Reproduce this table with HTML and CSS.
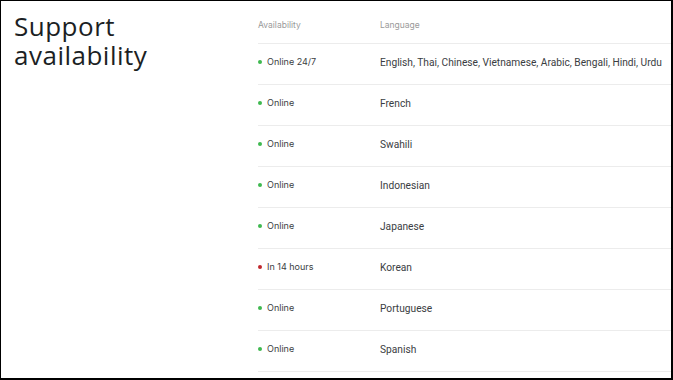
FILE: index.html
```html
<!DOCTYPE html>
<html>
<head>
<meta charset="utf-8">
<link rel="stylesheet" href="styles.css">
</head>
<body>
<div class="frame">
  <div class="side">
    <h1 class="title">Support<br>availability</h1>
  </div>
  <div class="table">
    <div class="row head">
      <div class="c-avail">Availability</div>
      <div class="c-lang">Language</div>
    </div>
    <div class="row">
      <div class="c-avail"><span class="dot on"></span>Online 24/7</div>
      <div class="c-lang">English, Thai, Chinese, Vietnamese, Arabic, Bengali, Hindi, Urdu</div>
    </div>
    <div class="row">
      <div class="c-avail"><span class="dot on"></span>Online</div>
      <div class="c-lang">French</div>
    </div>
    <div class="row">
      <div class="c-avail"><span class="dot on"></span>Online</div>
      <div class="c-lang">Swahili</div>
    </div>
    <div class="row">
      <div class="c-avail"><span class="dot on"></span>Online</div>
      <div class="c-lang">Indonesian</div>
    </div>
    <div class="row">
      <div class="c-avail"><span class="dot on"></span>Online</div>
      <div class="c-lang">Japanese</div>
    </div>
    <div class="row">
      <div class="c-avail"><span class="dot off"></span>In 14 hours</div>
      <div class="c-lang">Korean</div>
    </div>
    <div class="row">
      <div class="c-avail"><span class="dot on"></span>Online</div>
      <div class="c-lang">Portuguese</div>
    </div>
    <div class="row">
      <div class="c-avail"><span class="dot on"></span>Online</div>
      <div class="c-lang">Spanish</div>
    </div>
  </div>
</div>
</body>
</html>
```
FILE: styles.css
```css
html, body {
  margin: 0;
  padding: 0;
  background: #fff;
}
body {
  width: 673px;
  height: 380px;
  overflow: hidden;
  box-sizing: border-box;
  border-style: solid;
  border-color: #000;
  border-width: 1px 2px 2px 1px;
  font-family: Inter, "Liberation Sans", sans-serif;
}
.frame {
  display: flex;
  height: 100%;
}
.side {
  width: 257px;
  flex: none;
  padding-left: 13px;
  box-sizing: border-box;
}
.title {
  margin: 11px 0 0 0;
  font-family: "Open Sans", "Liberation Sans", sans-serif;
  font-weight: 400;
  font-size: 26px;
  line-height: 29px;
  color: #1c1f24;
  letter-spacing: 0.5px;
}
.table {
  flex: 1;
  display: flex;
  flex-direction: column;
}
.row {
  display: flex;
  align-items: center;
  height: 35px;
  border-bottom: 1px solid #ececec;
  padding-bottom: 5px;
}
.row.head {
  height: 37px;
  padding-top: 5px;
  padding-bottom: 0;
}
.c-avail {
  width: 122px;
  flex: none;
  display: flex;
  align-items: center;
  font-size: 9px;
  color: #3a3d42;
}
.head .c-avail, .head .c-lang {
  font-family: Inter, "Liberation Sans", sans-serif;
  font-size: 8.5px;
  color: #9a9a9a;
  padding-top: 0;
}
.c-lang {
  font-family: Roboto, "Liberation Sans", sans-serif;
  font-size: 10.2px;
  color: #3a3d42;
  padding-top: 1px;
  white-space: nowrap;
}
.dot {
  width: 4px;
  height: 4px;
  border-radius: 50%;
  margin-right: 5px;
  flex: none;
}
.dot.on {
  background: #3fb950;
}
.dot.off {
  background: #c0282d;
}
```
